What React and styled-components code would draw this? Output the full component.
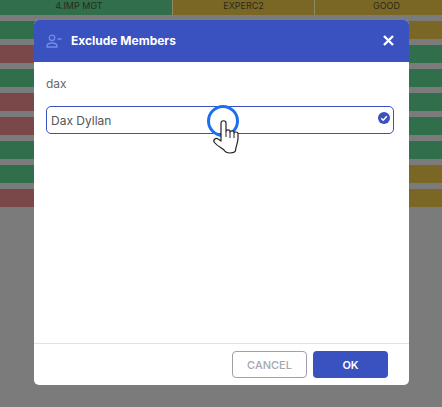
import React from "react";
import styled, { createGlobalStyle } from "styled-components";

const Global = createGlobalStyle`
  html, body { margin: 0; padding: 0; background: #7b7b7b; }
  body { width: 442px; height: 407px; overflow: hidden; font-family: Inter, "Liberation Sans", sans-serif; }
`;
const Page = styled.div`
  position: relative; width: 442px; height: 407px; overflow: hidden; background: #7b7b7b;
`;
const Board = styled.div`display: flex; flex-direction: column; gap: 6px;`;
const Head = styled.div`display: grid; grid-template-columns: 172px 142px 128px; height: 15px;`;
const colors = { green: "#316e4c", red: "#7a4848", yellow: "#7a6725" };
const HeadCell = styled.div`
  background: ${p => colors[p.$c]};
  border-left: ${p => (p.$first ? "none" : "1px solid #8f8a60")};
  color: #2a2a1c; font-size: 9px; line-height: 11px; text-align: center; box-sizing: border-box;
  padding: 0 ${p => p.$pr || 0}px 0 ${p => p.$pl || 0}px;
  overflow: hidden;
`;
const Row = styled.div`
  height: 18px; background: linear-gradient(to right, ${p => colors[p.$l]} 50%, ${p => colors[p.$r]} 50%);
`;
const Modal = styled.div`
  position: absolute; left: 34px; top: 20px; width: 375px; height: 365px;
  background: #fff; border-radius: 5px; overflow: hidden; display: flex; flex-direction: column;
`;
const ModalHead = styled.div`
  height: 42px; box-sizing: border-box; flex: none; background: #3a51c0; display: flex; align-items: center;
  padding: 0 15px 1px 12px; gap: 9px;
`;
const Title = styled.div`flex: 1; color: #fff; font-size: 12px; font-weight: 700;`;
const Body = styled.div`flex: 1; padding: 13px 15px 0 12px;`;
const Query = styled.div`color: #666; font-size: 12px; line-height: 18px; margin-bottom: 13px;`;
const Option = styled.div`
  height: 28px; box-sizing: border-box; border: 1px solid #3a51c0; border-radius: 5px; display: flex; align-items: center;
  justify-content: space-between; padding: 0 3px 0 4px; color: #555; font-size: 12px;
`;
const CheckIcon = styled.svg`margin-bottom: 4px;`;
const Footer = styled.div`
  height: 42px; box-sizing: border-box; flex: none; border-top: 1px solid #e2e2e2; display: flex; justify-content: flex-end; gap: 6px; padding: 7px 21px 0 0;
`;
const Btn = styled.button`
  width: 75px; height: 27px; box-sizing: border-box; border-radius: 4px; padding: 0;
  font: ${p => (p.$primary ? 600 : 500)} 11px Inter, sans-serif;
  background: ${p => (p.$primary ? "#3a51c0" : "#fff")};
  color: ${p => (p.$primary ? "#fff" : "#a6a6b0")};
  border: ${p => (p.$primary ? "none" : "1px solid #a0a0a8")};
`;
const Ring = styled.div`
  position: absolute; left: 207px; top: 105px; width: 32px; height: 32px; box-sizing: border-box;
  border: 3px solid #1c6ff0; border-radius: 50%;
`;
const Hand = styled.svg`position: absolute; left: 212px; top: 120px;`;

const rows = [["green","yellow"],["red","green"],["green","green"],["red","green"],["red","green"],["green","green"],["green","yellow"],["red","yellow"]];

export default function App() {
  return (
    <Page>
      <Global />
      <Board>
        <Head>
          <HeadCell $c="green" $first $pr={14}>4.IMP MGT</HeadCell>
          <HeadCell $c="yellow">EXPERC2</HeadCell>
          <HeadCell $c="yellow" $pl={16}>GOOD</HeadCell>
        </Head>
        {rows.map((r, i) => <Row key={i} $l={r[0]} $r={r[1]} />)}
      </Board>
      <Modal>
        <ModalHead>
          <svg width="16" height="14" viewBox="0 0 16 14" fill="none" stroke="#6d8fe8" strokeWidth="1.3">
            <circle cx="6" cy="3.8" r="2.7" />
            <path d="M1 13v-.8c0-2 2-3.200 5-3.200s5 1.200 5 3.200v.8z" />
            <path d="M11.500 5h4" />
          </svg>
          <Title>Exclude Members</Title>
          <svg width="11" height="11" viewBox="0 0 11 11" stroke="#fff" strokeWidth="2.4"><path d="M1 1l9 9M10 1l-9 9" /></svg>
        </ModalHead>
        <Body>
          <Query>dax</Query>
          <Option>
            Dax Dyllan
            <CheckIcon width="12" height="12" viewBox="0 0 12 12">
              <circle cx="6" cy="6" r="6" fill="#3a51c0" />
              <path d="M3.200 6.200l2 2 3.600-4" fill="none" stroke="#fff" strokeWidth="1.5" />
            </CheckIcon>
          </Option>
        </Body>
        <Footer>
          <Btn>CANCEL</Btn>
          <Btn $primary>OK</Btn>
        </Footer>
      </Modal>
      <Ring />
      <Hand width="28" height="35" viewBox="0 0 28 35">
        <path d="M9 3c0-3 5-3 5 0v8c0-1.500 4-1.500 4 0v1c0-1.500 4-1.500 4 0v1c0-1.400 4-1.400 4 .3v5c0 4-1.500 7-2.200 10.200C24 32 22 33 18 33c-3 0-4.500-.5-6-3C9 27 6 27 2.500 22.500c-2-2.500 1-5 3.500-3.500L9 21z" fill="#fff" stroke="#222" strokeWidth="1.2" strokeLinejoin="round" />
        <path d="M14 11v6M18 12v6M22 13v5" fill="none" stroke="#222" strokeWidth="1" />
      </Hand>
    </Page>
  );
}
